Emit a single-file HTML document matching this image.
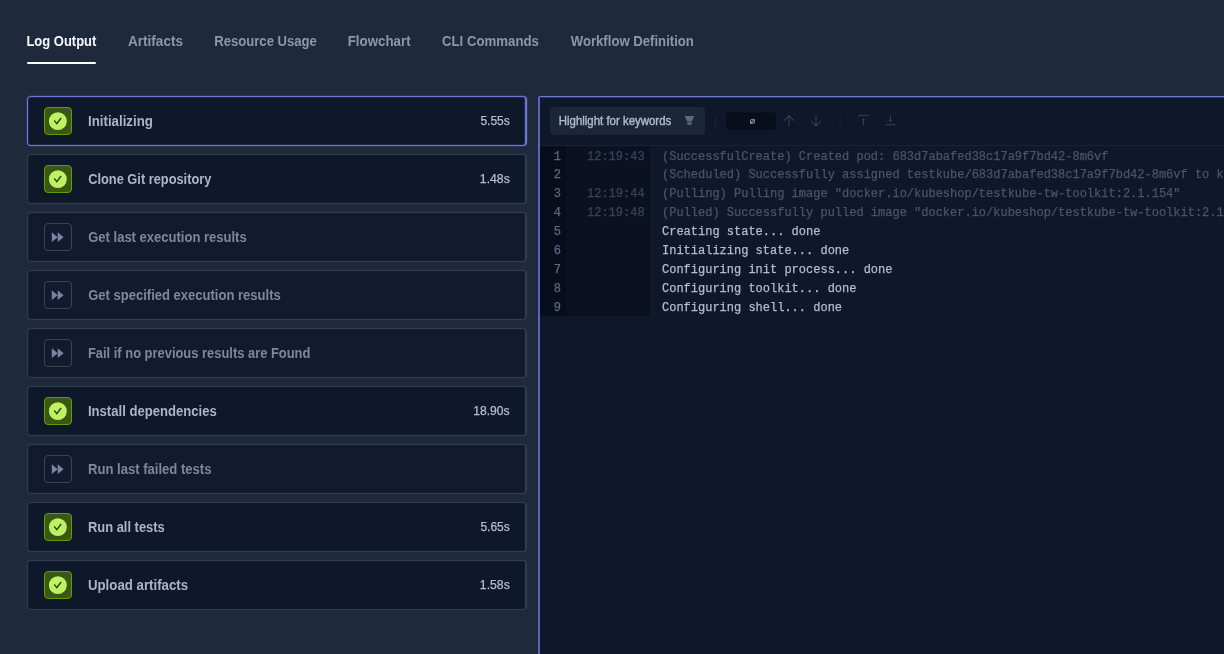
<!DOCTYPE html>
<html lang="en">
<head>
<meta charset="utf-8">
<title>Log Output</title>
<style>
*{box-sizing:border-box;margin:0;padding:0}
html,body{width:1224px;height:654px;overflow:hidden;background:#1e293b}
body{font-family:"Liberation Sans",sans-serif;color:#cbd5e1;position:relative}
.tabs,.steps,.log{will-change:transform}
.tabs{position:absolute;left:0;top:0;width:1224px;height:64px;white-space:nowrap}
.tab{position:absolute;top:0;height:64px;line-height:82px;font-size:14px;color:#8a97ac;font-weight:bold}
.tab.active{color:#f4f6f9}
.ink{position:absolute;left:27px;top:62px;width:69px;height:2px;background:#fff;border-radius:1px}
.steps{position:absolute;left:27px;top:96px;width:500px;height:520px}
.step{position:absolute;left:0;width:500px;height:50px;border:1px solid #2f3d52;border-right-width:2px;border-radius:4px;background:#141a2e}
.step.ok{background:#0f172a}
.step{box-shadow:0 0 0 1px rgba(51,65,85,0.12),inset 0 0 0 1px rgba(51,65,85,0.12)}
.step.sel{border-color:#6b76d6;box-shadow:0 0 0 1px rgba(129,140,248,0.14),inset 0 0 0 1px rgba(129,140,248,0.14)}
.ico{position:absolute;left:16px;top:10px;width:28px;height:28px;border-radius:4px;border:1px solid #35445a}
.ok .ico{background:#3a5812;border-color:#629c0b}
.ico svg{position:absolute;left:-1px;top:-1px;width:28px;height:28px}
.name{position:absolute;left:60px;top:0;line-height:48px;font-size:14px;color:#7c889e;white-space:nowrap;font-weight:bold}
.ok .name{color:#abb5c9}
.dur{position:absolute;left:452px;top:0;line-height:48px;font-size:12px;color:#b4bed2;white-space:nowrap;-webkit-text-stroke:0.25px #b4bed2}
.log{position:absolute;left:538px;top:96px;width:700px;height:600px;background:#0f172a;border-left:2px solid #5964bb;border-top:1px solid #6b76d6;border-top-left-radius:2px;box-shadow:inset 0 1px 0 rgba(107,118,214,0.3)}
.bar{position:absolute;left:0;top:0;right:0;height:49px;border-bottom:1px solid #1a2336}
.hl{position:absolute;left:10px;top:10px;width:155px;height:28px;border-radius:4px;background:#1c2639;font-size:12px;line-height:28px;color:#b0bacd;padding-left:10px;white-space:nowrap;-webkit-text-stroke:0.4px #b0bacd}
.fil{position:absolute;left:135px;top:9px;width:10px;height:10px;overflow:visible}
.sep{position:absolute;top:19px;width:1px;height:11px;background:#1b253a}
.cnt{position:absolute;left:186px;top:16px;width:50px;height:17px;padding-left:3px;padding-top:0.5px;border-radius:4px;background:#090e1c;box-shadow:0 -1px 0 rgba(9,14,28,0.5);color:#cbd5e1;font-family:"Liberation Mono",monospace;font-size:9px;line-height:17px;text-align:center}
.ti{position:absolute;top:17px;width:14px;height:14px}
.lines{position:absolute;left:0;top:49px;width:700px;height:169.7px;padding-top:2px;background:linear-gradient(90deg,#080d1b 26px,#0b1121 26px,#0b1121 110px,rgba(0,0,0,0) 110px);font-family:"Liberation Mono",monospace;font-size:12px;line-height:18.857px}
.ln{display:flex;height:18.857px;white-space:pre;-webkit-text-stroke:0.25px currentColor}
.ln span{flex:none}
.n{width:26px;color:#5c6981;text-align:right;padding-right:5px}
.t{width:84px;color:#38445b;padding-left:21px}
.m{padding-left:12px;color:#b3bdd0}
.m.d{color:#49556c}
.tab span,.name span,.dur span,.hl span{display:inline-block;transform-origin:0 50%}
.ln:nth-child(1){transform:translateY(-0.4px)}
.ln:nth-child(2){transform:translateY(-0.6px)}
.ln:nth-child(3),.ln:nth-child(4){transform:translateY(-1.2px)}
.ln:nth-child(n+5){transform:translateY(-0.2px)}
</style>
</head>
<body>
<div class="tabs">
<div class="tab active" style="left:27px"><span id="tab0" style="transform:translateX(-0.55px) scaleX(0.9260)">Log Output</span></div>
<div class="tab" style="left:128px"><span id="tab1" style="transform:translateX(0.00px) scaleX(0.9688)">Artifacts</span></div>
<div class="tab" style="left:215px"><span id="tab2" style="transform:translateX(-0.75px) scaleX(0.9353)">Resource Usage</span></div>
<div class="tab" style="left:348px"><span id="tab3" style="transform:translateX(-0.25px) scaleX(0.9500)">Flowchart</span></div>
<div class="tab" style="left:443px"><span id="tab4" style="transform:translateX(-1.00px) scaleX(0.9433)">CLI Commands</span></div>
<div class="tab" style="left:571px"><span id="tab5" style="transform:translateX(-0.25px) scaleX(0.9386)">Workflow Definition</span></div>
<div class="ink"></div>
</div>
<div class="steps">
<div class="step ok sel" style="top:0px"><div class="ico"><svg viewBox="0 0 28 28"><circle cx="13.85" cy="14.15" r="8.95" fill="#bef264"/><path d="M10.2 13.4l2.6 3.2 4.3-5.6" fill="none" stroke="#263b0c" stroke-width="1.3"/></svg></div><div class="name"><span id="step0" style="transform:translateX(0.05px) scaleX(0.9466)">Initializing</span></div><div class="dur"><span id="dur0" style="transform:translateX(0.45px) scaleX(0.9983)">5.55s</span></div></div>
<div class="step ok" style="top:58px"><div class="ico"><svg viewBox="0 0 28 28"><circle cx="13.85" cy="14.15" r="8.95" fill="#bef264"/><path d="M10.2 13.4l2.6 3.2 4.3-5.6" fill="none" stroke="#263b0c" stroke-width="1.3"/></svg></div><div class="name"><span id="step1" style="transform:translateX(0.20px) scaleX(0.9153)">Clone Git repository</span></div><div class="dur"><span id="dur1" style="transform:translateX(-0.15px) scaleX(1.0195)">1.48s</span></div></div>
<div class="step " style="top:116px"><div class="ico"><svg viewBox="0 0 28 28"><path d="M7.8 9.3l5.9 4.9-5.9 4.9zM13.7 9.3l5.9 4.9-5.9 4.9z" fill="#7685a0"/></svg></div><div class="name"><span id="step2" style="transform:translateX(0.20px) scaleX(0.9300)">Get last execution results</span></div></div>
<div class="step " style="top:174px"><div class="ico"><svg viewBox="0 0 28 28"><path d="M7.8 9.3l5.9 4.9-5.9 4.9zM13.7 9.3l5.9 4.9-5.9 4.9z" fill="#7685a0"/></svg></div><div class="name"><span id="step3" style="transform:translateX(0.20px) scaleX(0.9303)">Get specified execution results</span></div></div>
<div class="step " style="top:232px"><div class="ico"><svg viewBox="0 0 28 28"><path d="M7.8 9.3l5.9 4.9-5.9 4.9zM13.7 9.3l5.9 4.9-5.9 4.9z" fill="#7685a0"/></svg></div><div class="name"><span id="step4" style="transform:translateX(-0.05px) scaleX(0.9223)">Fail if no previous results are Found</span></div></div>
<div class="step ok" style="top:290px"><div class="ico"><svg viewBox="0 0 28 28"><circle cx="13.85" cy="14.15" r="8.95" fill="#bef264"/><path d="M10.2 13.4l2.6 3.2 4.3-5.6" fill="none" stroke="#263b0c" stroke-width="1.3"/></svg></div><div class="name"><span id="step5" style="transform:translateX(-0.05px) scaleX(0.9350)">Install dependencies</span></div><div class="dur"><span id="dur5" style="transform:translateX(-6.75px) scaleX(1.0115)">18.90s</span></div></div>
<div class="step " style="top:348px"><div class="ico"><svg viewBox="0 0 28 28"><path d="M7.8 9.3l5.9 4.9-5.9 4.9zM13.7 9.3l5.9 4.9-5.9 4.9z" fill="#7685a0"/></svg></div><div class="name"><span id="step6" style="transform:translateX(-0.05px) scaleX(0.9342)">Run last failed tests</span></div></div>
<div class="step ok" style="top:406px"><div class="ico"><svg viewBox="0 0 28 28"><circle cx="13.85" cy="14.15" r="8.95" fill="#bef264"/><path d="M10.2 13.4l2.6 3.2 4.3-5.6" fill="none" stroke="#263b0c" stroke-width="1.3"/></svg></div><div class="name"><span id="step7" style="transform:translateX(-0.05px) scaleX(0.9223)">Run all tests</span></div><div class="dur"><span id="dur7" style="transform:translateX(0.45px) scaleX(0.9983)">5.65s</span></div></div>
<div class="step ok" style="top:464px"><div class="ico"><svg viewBox="0 0 28 28"><circle cx="13.85" cy="14.15" r="8.95" fill="#bef264"/><path d="M10.2 13.4l2.6 3.2 4.3-5.6" fill="none" stroke="#263b0c" stroke-width="1.3"/></svg></div><div class="name"><span id="step8" style="transform:translateX(-0.05px) scaleX(0.9464)">Upload artifacts</span></div><div class="dur"><span id="dur8" style="transform:translateX(-0.15px) scaleX(1.0195)">1.58s</span></div></div>
</div>
<div class="log">
<div class="bar">
<div class="hl"><span id="hl" style="transform:translateX(-1.25px) scaleX(0.9530)">Highlight for keywords</span><svg class="fil" viewBox="0 0 10 10"><path d="M-0.4 0.1h9.7l-2.5 5.3h-4.7zM2.3 6.2h4.4v2.6h-4.4z" fill="#5d687b"/></svg></div>
<div class="sep" style="left:175px"></div>
<div class="cnt"><span>&#8709;</span></div>
<svg class="ti" style="left:242.3px" viewBox="0 0 14 14"><path d="M7 12v-10.3M2.1 6.6l4.9-4.9 4.9 4.9" fill="none" stroke="#364259" stroke-width="1.1"/></svg>
<svg class="ti" style="left:269px" viewBox="0 0 14 14"><path d="M7 1.7v10.3M2.1 7.1l4.9 4.9 4.9-4.9" fill="none" stroke="#364259" stroke-width="1.1"/></svg>
<div class="sep" style="left:300px;transform:translateX(-0.4px)"></div>
<svg class="ti" style="left:316.3px" viewBox="0 0 14 14"><path d="M2.4 1.6h10M7.4 11.2v-6.4M5.8 6.4l1.6-1.6 1.6 1.6" fill="none" stroke="#364259" stroke-width="1"/></svg>
<svg class="ti" style="left:343.4px" viewBox="0 0 14 14"><path d="M2.4 10.7h10M7.4 1.1v6.4M5.8 5.9l1.6 1.6 1.6-1.6" fill="none" stroke="#364259" stroke-width="1"/></svg>
</div>
<div class="lines">
<div class="ln"><span class="n">1</span><span class="t">12:19:43</span><span class="m d">(SuccessfulCreate) Created pod: 683d7abafed38c17a9f7bd42-8m6vf</span></div>
<div class="ln"><span class="n">2</span><span class="t"></span><span class="m d">(Scheduled) Successfully assigned testkube/683d7abafed38c17a9f7bd42-8m6vf to k</span></div>
<div class="ln"><span class="n">3</span><span class="t">12:19:44</span><span class="m d">(Pulling) Pulling image &quot;docker.io/kubeshop/testkube-tw-toolkit:2.1.154&quot;</span></div>
<div class="ln"><span class="n">4</span><span class="t">12:19:48</span><span class="m d">(Pulled) Successfully pulled image &quot;docker.io/kubeshop/testkube-tw-toolkit:2.1.154&quot;</span></div>
<div class="ln"><span class="n">5</span><span class="t"></span><span class="m">Creating state... done</span></div>
<div class="ln"><span class="n">6</span><span class="t"></span><span class="m">Initializing state... done</span></div>
<div class="ln"><span class="n">7</span><span class="t"></span><span class="m">Configuring init process... done</span></div>
<div class="ln"><span class="n">8</span><span class="t"></span><span class="m">Configuring toolkit... done</span></div>
<div class="ln"><span class="n">9</span><span class="t"></span><span class="m">Configuring shell... done</span></div>
</div>
</div>
</body>
</html>
